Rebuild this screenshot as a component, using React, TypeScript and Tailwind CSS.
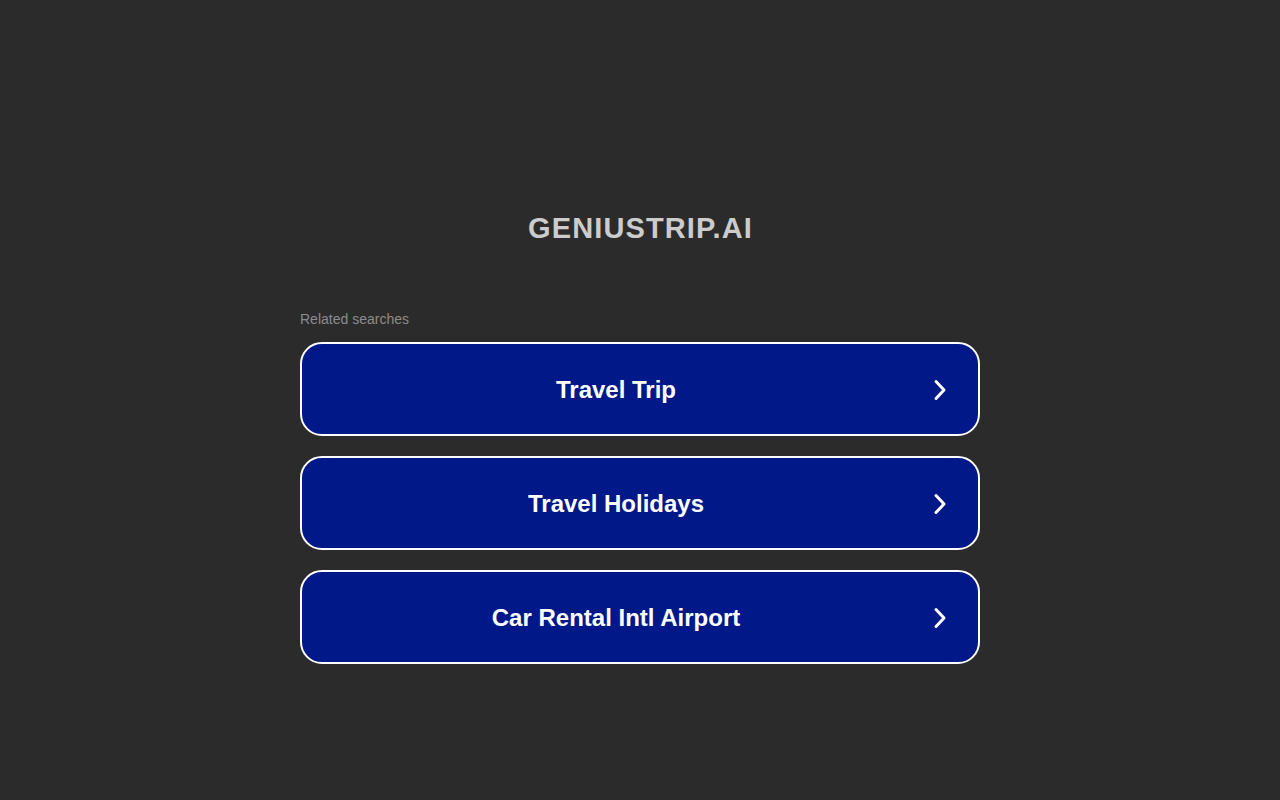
import React from "react";

const items = ["Travel Trip", "Travel Holidays", "Car Rental Intl Airport"];

function Chevron() {
  return (
    <svg width="14" height="22" viewBox="0 0 14 22" fill="none">
      <path d="M3 2.5 L11 11 L3 19.5" stroke="white" strokeWidth="3" strokeLinecap="round" strokeLinejoin="round" />
    </svg>
  );
}

export default function App() {
  return (
    <div
      className="min-h-screen w-full bg-[#2b2b2b] flex flex-col items-center"
      style={{ fontFamily: '"Liberation Sans", Arial, sans-serif' }}
    >
      <h1 className="mt-[211px] text-[29px] leading-[34px] font-bold text-[#cccccc] tracking-[1.1px] pl-[1.1px]">
        GENIUSTRIP.AI
      </h1>
      <div className="mt-[66px] w-[680px] flex flex-col">
        <div className="text-[14px] leading-[16px] text-[#8c8c8c]">Related searches</div>
        <div className="mt-[15px] flex flex-col gap-[20px]">
          {items.map((t) => (
            <div
              key={t}
              className="h-[94px] rounded-[22px] border-2 border-white bg-[#011889] flex items-center"
            >
              <div className="flex-1 text-center text-[24px] font-bold text-white pt-[2px]">{t}</div>
              <div className="w-[20px] flex justify-center mr-[28px] pt-[1px]">
                <Chevron />
              </div>
            </div>
          ))}
        </div>
      </div>
    </div>
  );
}
